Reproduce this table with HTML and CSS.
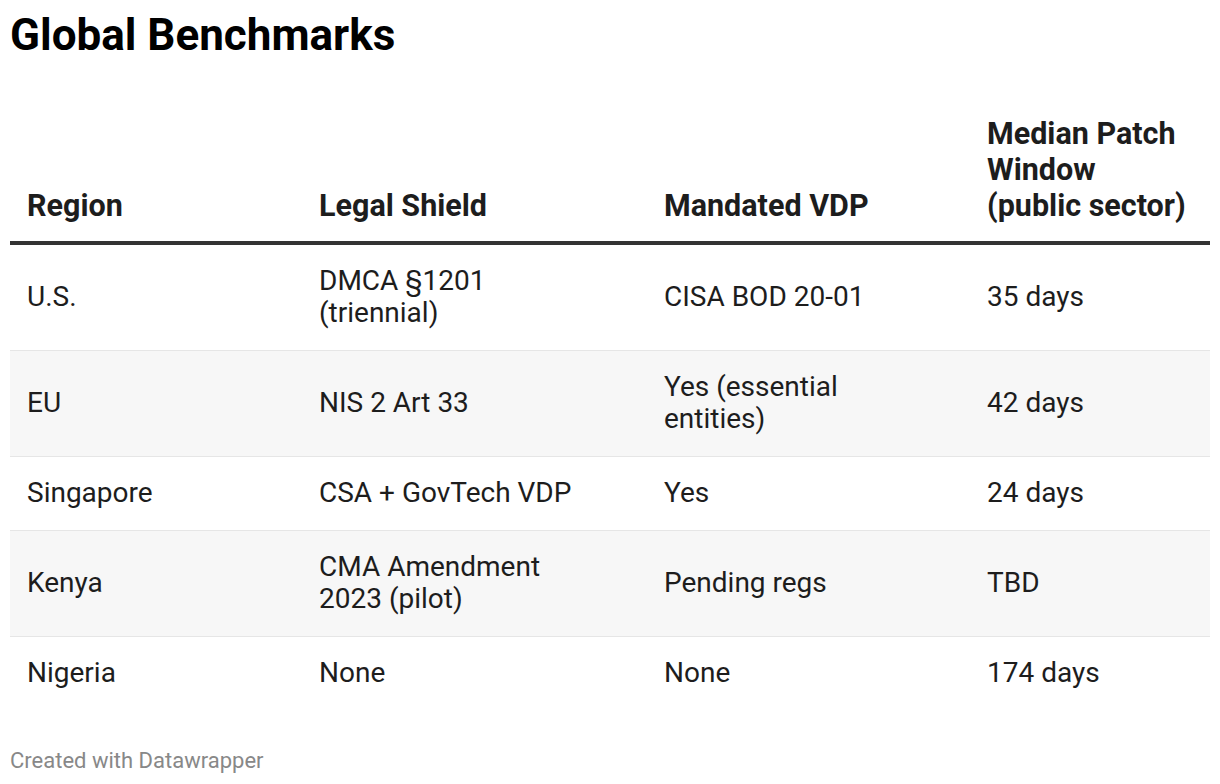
FILE: index.html
```html
<!DOCTYPE html>
<html>
<head>
<meta charset="utf-8">
<link rel="stylesheet" href="styles.css">
</head>
<body>
<div class="chart">
  <h1 class="title">Global Benchmarks</h1>
  <table class="dw-table">
    <colgroup>
      <col class="c1"><col class="c2"><col class="c3"><col class="c4">
    </colgroup>
    <thead>
      <tr>
        <th>Region</th>
        <th class="col2">Legal Shield</th>
        <th class="col3">Mandated VDP</th>
        <th class="col4">Median Patch Window (public sector)</th>
      </tr>
    </thead>
    <tbody>
      <tr>
        <td>U.S.</td>
        <td class="col2">DMCA §1201 (triennial)</td>
        <td class="col3">CISA BOD 20-01</td>
        <td class="col4">35 days</td>
      </tr>
      <tr class="alt">
        <td>EU</td>
        <td class="col2">NIS 2 Art 33</td>
        <td class="col3">Yes (essential entities)</td>
        <td class="col4">42 days</td>
      </tr>
      <tr>
        <td>Singapore</td>
        <td class="col2">CSA + GovTech VDP</td>
        <td class="col3">Yes</td>
        <td class="col4">24 days</td>
      </tr>
      <tr class="alt">
        <td>Kenya</td>
        <td class="col2">CMA Amendment 2023 (pilot)</td>
        <td class="col3">Pending regs</td>
        <td class="col4">TBD</td>
      </tr>
      <tr class="last">
        <td>Nigeria</td>
        <td class="col2">None</td>
        <td class="col3">None</td>
        <td class="col4">174 days</td>
      </tr>
    </tbody>
  </table>
  <div class="footer">Created with Datawrapper</div>
</div>
</body>
</html>
```
FILE: styles.css
```css
html, body {
  margin: 0;
  padding: 0;
  background: #ffffff;
}
body {
  font-family: Roboto, "Liberation Sans", Arial, sans-serif;
  color: #1d1d1d;
}
.chart {
  padding: 0 10px;
}
.title {
  margin: 0;
  padding-top: 9px;
  font-size: 44px;
  line-height: 52px;
  font-weight: 700;
  color: #000;
}
.dw-table {
  margin-top: 55px;
  width: 1200px;
  border-collapse: collapse;
  table-layout: fixed;
}
.c1 { width: 292px; }
.c2 { width: 345px; }
.c3 { width: 323px; }
.c4 { width: 240px; }
th {
  text-align: left;
  vertical-align: bottom;
  font-size: 30.5px;
  line-height: 36px;
  font-weight: 700;
  padding: 0 17px 17px 17px;
  border-bottom: 4px solid #333333;
  color: #1d1d1d;
}
td {
  font-size: 28px;
  line-height: 32px;
  padding: 20px 17px 21px 17px;
  vertical-align: middle;
  border-bottom: 1px solid #e6e6e6;
}
th.col2, td.col2,
th.col3, td.col3 {
  padding-right: 45px;
}
tr.alt td {
  background: #f7f7f7;
}
tr.last td {
  border-bottom: none;
}
.footer {
  margin-top: 38px;
  font-size: 22px;
  line-height: 26px;
  color: #888888;
}
```
